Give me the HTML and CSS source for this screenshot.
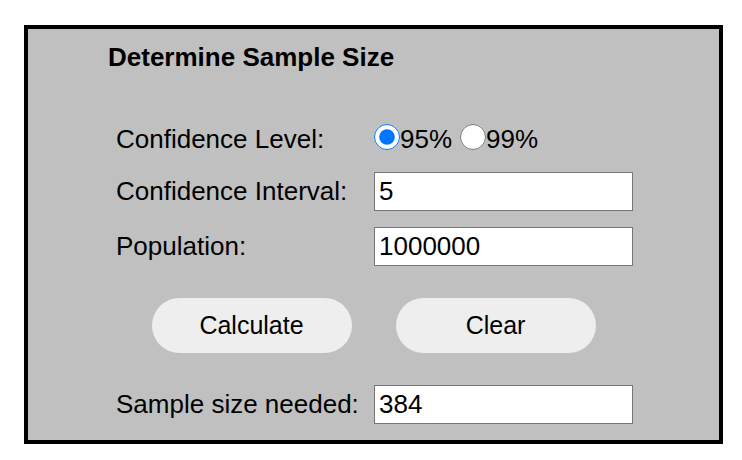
FILE: index.html
```html
<!DOCTYPE html>
<html>
<head>
<meta charset="utf-8">
<link rel="stylesheet" href="styles.css">
</head>
<body>
<div class="panel">
  <h1 class="title">Determine Sample Size</h1>
  <div class="form">
    <div class="label label-radio">Confidence Level:</div>
    <div class="radios">
      <label class="opt"><input type="radio" name="cl" checked><span>95%</span></label>
      <label class="opt"><input type="radio" name="cl"><span>99%</span></label>
    </div>
    <div class="label">Confidence Interval:</div>
    <input class="field" type="text" value="5">
    <div class="label">Population:</div>
    <input class="field" type="text" value="1000000">
  </div>
  <div class="buttons">
    <button class="btn">Calculate</button>
    <button class="btn">Clear</button>
  </div>
  <div class="form result">
    <div class="label">Sample size needed:</div>
    <input class="field" type="text" value="384">
  </div>
</div>
</body>
</html>
```
FILE: styles.css
```css
html, body {
  margin: 0;
  padding: 0;
  background: #ffffff;
}
body {
  padding: 25px 0 0 24px;
  font-family: "Liberation Sans", Arial, sans-serif;
}
.panel {
  width: 691px;
  height: 411px;
  border: 4px solid #000;
  background: #c0c0c0;
  box-sizing: content-box;
  display: flex;
  flex-direction: column;
}
.title {
  margin: 0;
  padding: 13px 0 0 80px;
  font-size: 26px;
  line-height: 30px;
  font-weight: bold;
  color: #000;
}
.form {
  display: grid;
  grid-template-columns: 258px 259px;
  grid-auto-rows: 39px;
  row-gap: 16px;
  align-items: center;
  padding-left: 88px;
  margin-top: 45px;
}
.label {
  font-size: 26px;
  color: #000;
}
.label-radio {
  padding-top: 5px;
}
.radios {
  display: flex;
  align-items: center;
  gap: 8px;
}
.opt {
  display: flex;
  align-items: center;
  font-size: 26px;
}
.opt span {
  padding-top: 5px;
}
.opt input {
  width: 26px;
  height: 26px;
  margin: 0;
}
.field {
  width: 259px;
  height: 39px;
  box-sizing: border-box;
  border: 1px solid #767676;
  padding: 0 4px;
  font-family: "Liberation Sans", Arial, sans-serif;
  font-size: 26px;
  color: #000;
  background: #fff;
  margin: 0;
}
.buttons {
  display: flex;
  justify-content: center;
  gap: 44px;
  margin-top: 32px;
}
.btn {
  width: 200px;
  height: 55px;
  border: none;
  border-radius: 28px;
  background: #eeeeee;
  font-family: "Liberation Sans", Arial, sans-serif;
  font-size: 25px;
  color: #000;
  padding: 0;
}
.result {
  margin-top: 32px;
}
```
